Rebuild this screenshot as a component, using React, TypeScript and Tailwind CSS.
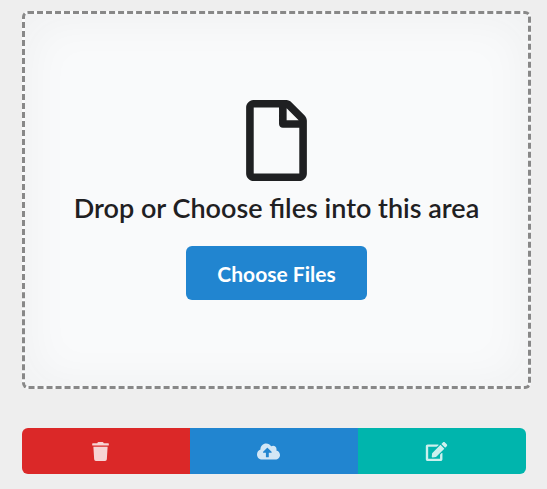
import { FaCloudUploadAlt, FaEdit, FaRegFile, FaTrash } from "react-icons/fa";

const actions = [
  { label: "Delete files", Icon: FaTrash, color: "bg-[#db2828]" },
  { label: "Upload files", Icon: FaCloudUploadAlt, color: "bg-[#2185d0]" },
  { label: "Edit files", Icon: FaEdit, color: "bg-[#00b5ad]" },
];

export default function App() {
  return (
    <main className="min-h-screen bg-[#eeeeee] pt-[11px] pr-4 pl-[22px] font-[Lato,sans-serif] text-[#1f2022]">
      <section className="flex min-h-[378px] flex-col items-center justify-center rounded-md border-3 border-dashed border-[#888888] bg-[#f9fafb] shadow-[inset_0_2px_50px_0_rgba(34,36,38,0.05)]">
        <FaRegFile className="h-[81px] w-[61px]" aria-hidden="true" />
        <h1 className="mt-[9px] mb-5 text-center text-[27px] leading-9 font-semibold">
          Drop or Choose files into this area
        </h1>
        <button
          type="button"
          className="h-[54px] rounded-md bg-[#2185d0] px-[31px] pt-0.5 text-[21px] font-bold text-white"
        >
          Choose Files
        </button>
      </section>
      <div className="mt-[39px] mr-[5px] flex overflow-hidden rounded-md">
        {actions.map(({ label, Icon, color }) => (
          <button
            key={label}
            type="button"
            aria-label={label}
            className={`flex h-[46px] flex-1 items-center justify-center pr-[11px] text-white ${color}`}
          >
            <Icon className="h-[19px] w-[23px] opacity-80" />
          </button>
        ))}
      </div>
    </main>
  );
}
